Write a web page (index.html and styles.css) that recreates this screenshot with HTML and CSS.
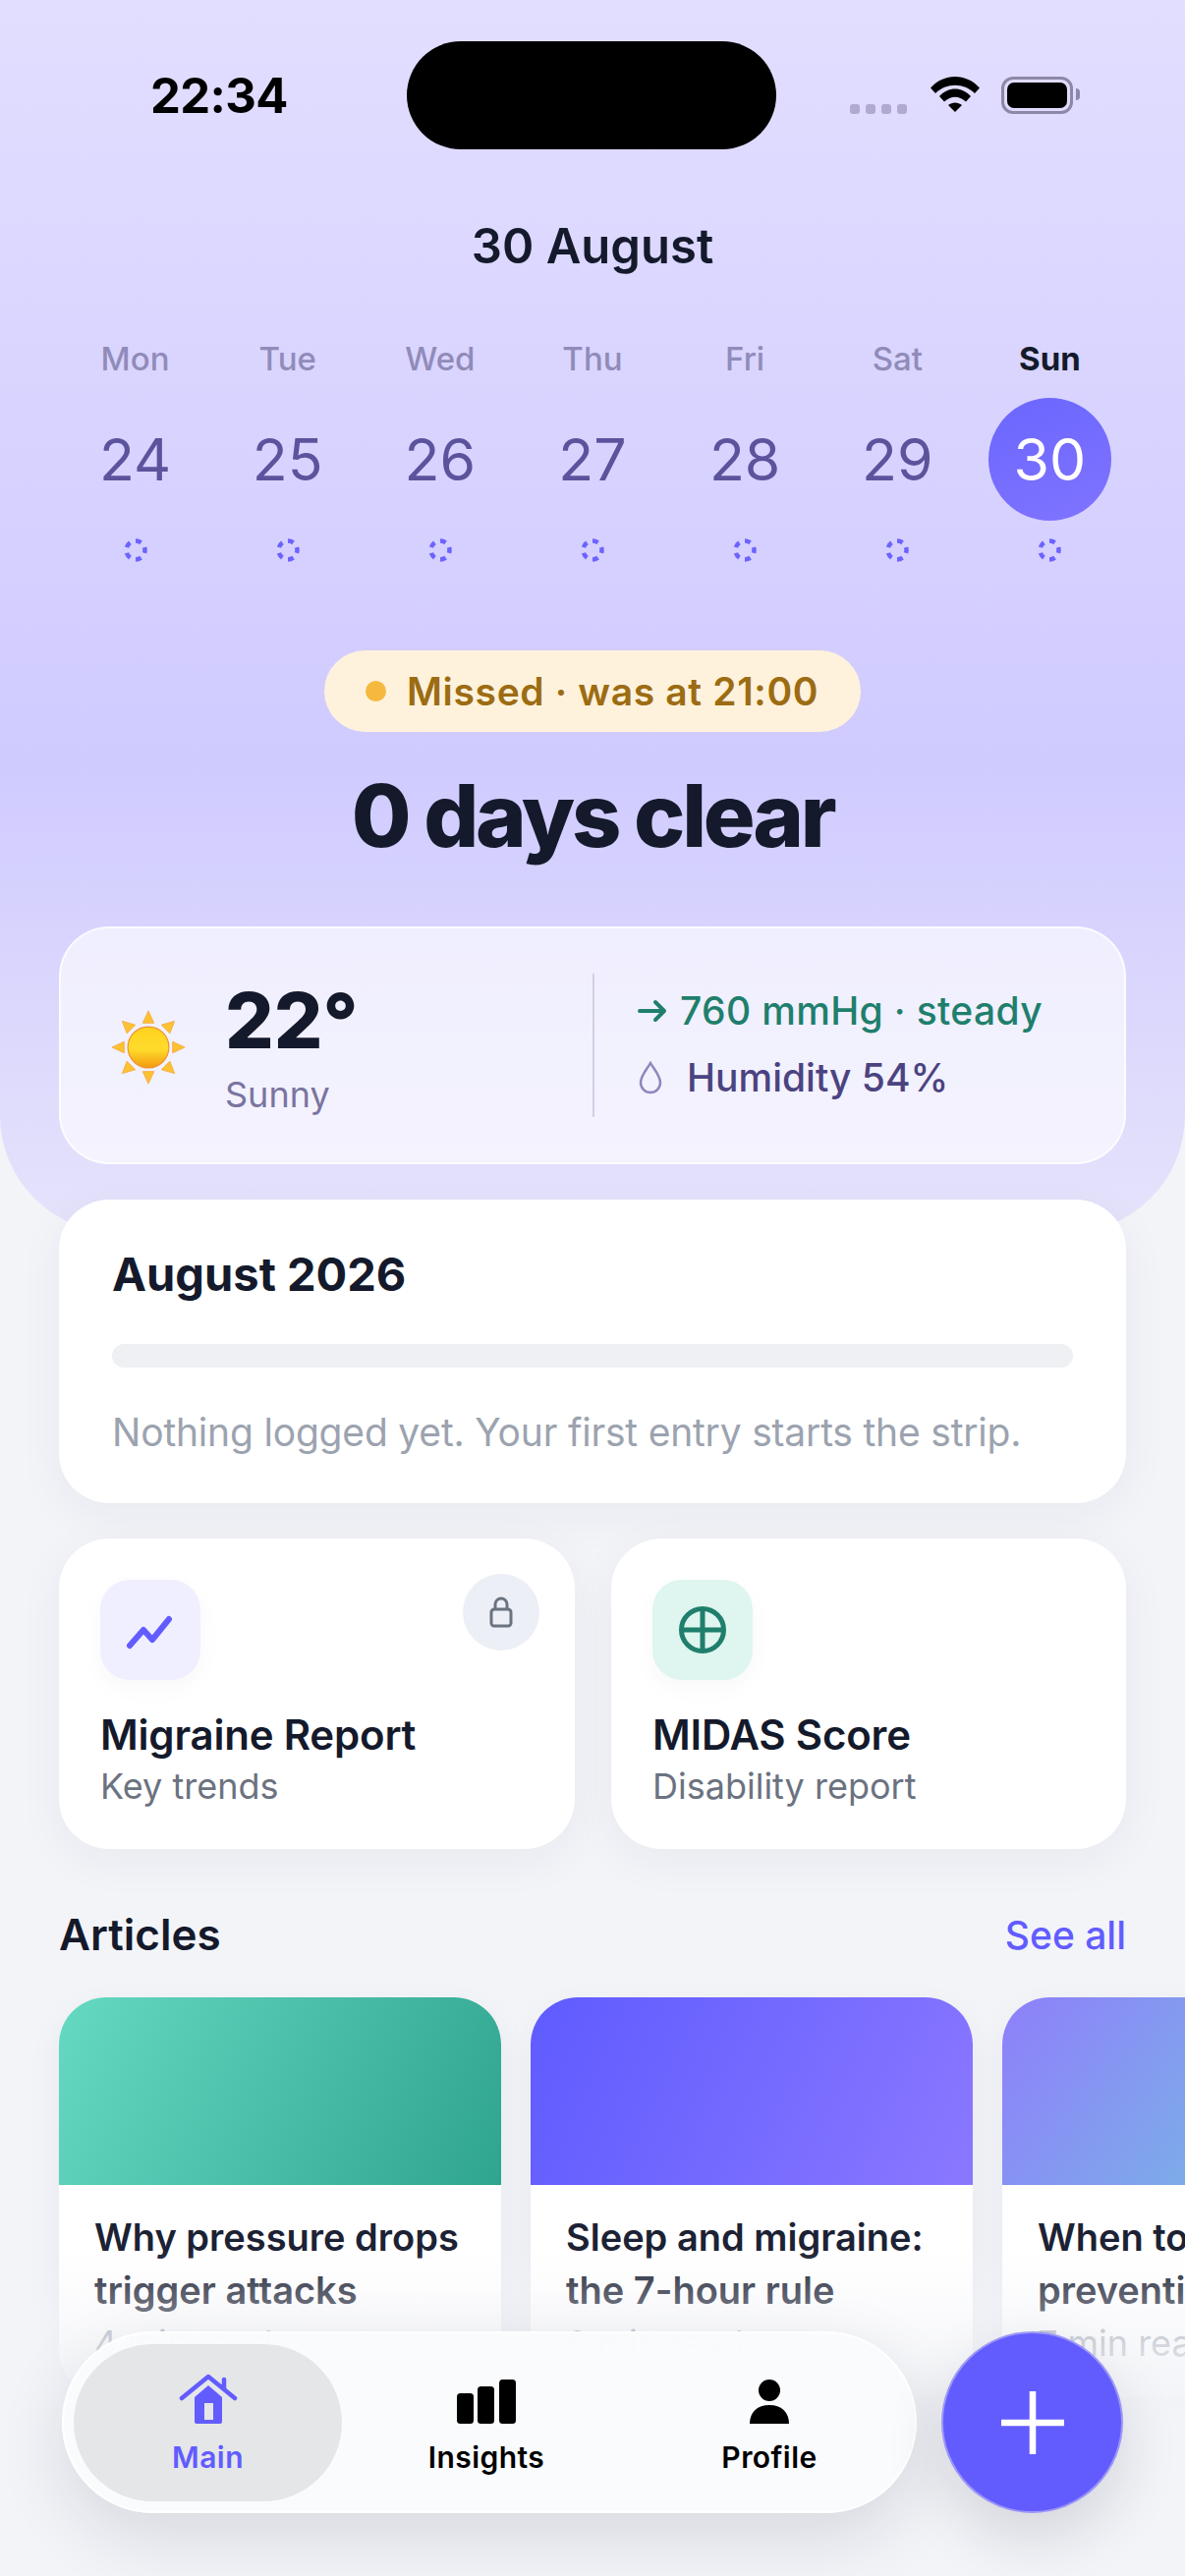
FILE: index.html
```html
<!DOCTYPE html>
<html lang="en">
<head>
<meta charset="utf-8">
<title>Migraine diary</title>
<link rel="stylesheet" href="styles.css">
</head>
<body>
<svg class="defs" width="0" height="0" aria-hidden="true">
  <symbol id="ring" viewBox="0 0 24 24"><circle cx="12" cy="12" r="9.5" fill="none" stroke="#6c63ff" stroke-width="4.5" pathLength="50" stroke-dasharray="5 5" stroke-dashoffset="-7.5"/></symbol>
</svg>
<div class="app">
  <header class="hero">
    <div class="status">
      <span class="time">22:34</span>
      <span class="island"></span>
      <span class="status-icons">
        <span class="signal"><i></i><i></i><i></i><i></i></span>
        <svg class="wifi" width="50" height="38" viewBox="0 0 50 38"><path d="M0 12.500C13 -3 37 -3 50 12.500L45 18C34 7 16 7 5 18Z" fill="#000"/><path d="M9 21C18 11 32 11 41 21L36 26.500C29 20 21 20 14 26.500Z" fill="#000"/><path d="M18 30C22 26.500 28 26.500 32 30L25 37Z" fill="#000"/></svg>
        <span class="battery"><i></i></span>
      </span>
    </div>
    <h1 class="date">30 August</h1>
    <div class="week">
      <div class="day"><span class="dname">Mon</span><span class="dnum">24</span><svg class="ring"><use href="#ring"/></svg></div>
      <div class="day"><span class="dname">Tue</span><span class="dnum">25</span><svg class="ring"><use href="#ring"/></svg></div>
      <div class="day"><span class="dname">Wed</span><span class="dnum">26</span><svg class="ring"><use href="#ring"/></svg></div>
      <div class="day"><span class="dname">Thu</span><span class="dnum">27</span><svg class="ring"><use href="#ring"/></svg></div>
      <div class="day"><span class="dname">Fri</span><span class="dnum">28</span><svg class="ring"><use href="#ring"/></svg></div>
      <div class="day"><span class="dname">Sat</span><span class="dnum">29</span><svg class="ring"><use href="#ring"/></svg></div>
      <div class="day today"><span class="dname">Sun</span><span class="dnum">30</span><svg class="ring"><use href="#ring"/></svg></div>
    </div>
    <div class="pill"><i class="pill-dot"></i>Missed · was at 21:00</div>
    <h2 class="streak">0 days clear</h2>
    <section class="weather">
      <svg class="sun" width="76" height="76" viewBox="0 0 80 80">
        <defs><linearGradient id="sung" x1="0" y1="0" x2="0" y2="1"><stop offset="0" stop-color="#ffd21f"/><stop offset=".55" stop-color="#fedb2b"/><stop offset="1" stop-color="#f39a10"/></linearGradient></defs>
        <g fill="#fdc22f" stroke="#f5ad4a" stroke-width="1"><path d="M40 1L46 14H34Z"/><path d="M40 79L46 66H34Z"/><path d="M1 40L14 34V46Z"/><path d="M79 40L66 34V46Z"/><path d="M12 12L26 16L17 25Z"/><path d="M68 12L54 16L63 25Z"/><path d="M12 68L26 64L17 55Z"/><path d="M68 68L54 64L63 55Z"/></g>
        <circle cx="40" cy="40" r="22" fill="url(#sung)" stroke="#ee8f2a" stroke-width="1.200"/>
      </svg>
      <div class="temp"><strong>22°</strong><span>Sunny</span></div>
      <div class="wx-detail">
        <div class="pressure"><svg width="30" height="26" viewBox="0 0 30 26"><path d="M2 13H27M18 4L27 13L18 22" fill="none" stroke="#1f7f6c" stroke-width="4" stroke-linecap="round" stroke-linejoin="round"/></svg>760 mmHg · steady</div>
        <div class="humidity"><svg width="26" height="34" viewBox="0 0 26 34"><path d="M13 2C9 9 3 15 3 22A10 10 0 0 0 23 22C23 15 17 9 13 2Z" fill="none" stroke="#8e87bd" stroke-width="2.500"/></svg>Humidity 54%</div>
      </div>
    </section>
  </header>

  <main class="content">
    <section class="card month">
      <h3>August 2026</h3>
      <div class="strip"></div>
      <p>Nothing logged yet. Your first entry starts the strip.</p>
    </section>

    <div class="tiles">
      <article class="card tile">
        <span class="tile-ico violet"><svg width="54" height="48" viewBox="0 0 54 48"><path d="M6 40L20 24L29 34L46 13" fill="none" stroke="#625cff" stroke-width="6" stroke-linecap="round" stroke-linejoin="round"/></svg></span>
        <span class="lock"><svg width="26" height="34" viewBox="0 0 26 34"><path d="M7 14V9A6 6 0 0 1 19 9V14" fill="none" stroke="#6b7280" stroke-width="3"/><rect x="3" y="14" width="20" height="17" rx="3" fill="none" stroke="#6b7280" stroke-width="3"/></svg></span>
        <h4>Migraine Report</h4>
        <p>Key trends</p>
      </article>
      <article class="card tile">
        <span class="tile-ico mint"><svg width="54" height="54" viewBox="0 0 54 54"><circle cx="27" cy="27" r="21.500" fill="none" stroke="#1f7f6c" stroke-width="5"/><path d="M27 6V48M6 27H48" stroke="#1f7f6c" stroke-width="5"/></svg></span>
        <h4>MIDAS Score</h4>
        <p>Disability report</p>
      </article>
    </div>

    <div class="sec-head"><h3>Articles</h3><a class="see-all">See all</a></div>

    <div class="articles">
      <article class="art"><div class="art-img g1"></div><div class="art-body"><h5>Why pressure drops trigger attacks</h5><p>4 min read</p></div></article>
      <article class="art"><div class="art-img g2"></div><div class="art-body"><h5>Sleep and migraine: the 7-hour rule</h5><p>6 min read</p></div></article>
      <article class="art"><div class="art-img g3"></div><div class="art-body"><h5>When to consider preventive care</h5><p>7 min read</p></div></article>
    </div>
  </main>

  <div class="fade"></div>

  <nav class="tabbar">
    <div class="tabs">
      <a class="tab active">
        <svg width="60" height="52" viewBox="0 0 60 52"><path d="M16 24L30 12L44 24V49Q44 51 42 51H18Q16 51 16 49Z" fill="#625cff"/><rect x="26" y="30" width="9" height="17" fill="#e5e6e8"/><path d="M3 25L30 3L57 25M46 6V16" fill="none" stroke="#625cff" stroke-width="4.500" stroke-linecap="round" stroke-linejoin="round"/></svg>
        <span>Main</span>
      </a>
      <a class="tab">
        <svg width="60" height="46" viewBox="0 0 60 46"><rect x="0" y="14" width="17" height="31" rx="3.500"/><rect x="21" y="7" width="17" height="38" rx="3.500"/><rect x="43" y="0" width="17" height="45" rx="3.500"/></svg>
        <span>Insights</span>
      </a>
      <a class="tab">
        <svg width="42" height="46" viewBox="0 0 42 46"><circle cx="21" cy="11" r="11"/><path d="M1 45C1 33 9 26 21 26S41 33 41 45Z"/></svg>
        <span>Profile</span>
      </a>
    </div>
    <button class="fab" aria-label="Add"><svg width="64" height="64" viewBox="0 0 64 64"><path d="M32 1V63M1 32H63" stroke="#fff" stroke-width="6.500" stroke-linecap="round"/></svg></button>
  </nav>
</div>
</body>
</html>
```
FILE: styles.css
```css
* { box-sizing: border-box; margin: 0; padding: 0; }
html, body { width: 1206px; height: 2622px; overflow: hidden; }
body { background: #f3f4f8; font-family: Inter, "Noto Sans", sans-serif; color: #141a2b; }
.defs { position: absolute; }
.app { position: relative; width: 1206px; height: 2622px; overflow: hidden; }

.hero {
  height: 1255px;
  padding: 42px 60px 0;
  border-radius: 0 0 120px 120px;
  background: linear-gradient(180deg, #e2deff 0%, #d0cbff 62%, #e5e3fb 100%);
}
.status { display: flex; align-items: center; height: 110px; padding: 0 54px 0 93px; }
.time { width: 140px; font-size: 49px; font-weight: 700; color: #000; letter-spacing: -.6px; }
.island { width: 376px; height: 110px; border-radius: 55px; background: #000; margin-left: 121px; }
.status-icons { display: flex; align-items: center; gap: 22px; margin-left: auto; }
.signal { display: flex; gap: 6px; margin-top: 28px; margin-right: 2px; }
.signal i { width: 10px; height: 10px; border-radius: 3px; background: #b0a9d0; }
.wifi { margin-top: -2px; }
.battery { position: relative; width: 73px; height: 38px; border: 3.500px solid #8e88a8; border-radius: 12px; padding: 3px; display: block; }
.battery i { display: block; height: 100%; background: #000; border-radius: 7px; }
.battery::after { content: ""; position: absolute; right: -9.500px; top: 9px; width: 4px; height: 12px; background: #8e88a8; border-radius: 0 4px 4px 0; }

.date { margin-top: 71px; text-align: center; font-size: 49px; line-height: 56px; font-weight: 600; color: #141a2b; }
.week { display: grid; grid-template-columns: repeat(7, 1fr); margin-top: 66px; }
.day { display: flex; flex-direction: column; align-items: center; }
.dname { font-size: 33px; line-height: 40px; font-weight: 500; color: #908bb9; }
.dnum { width: 125px; height: 125px; margin-top: 20px; border-radius: 50%; display: flex; align-items: center; justify-content: center; font-size: 59px; font-weight: 400; color: #5c539d; }
.ring { width: 24px; height: 24px; margin-top: 18px; }
.today .dname { color: #141a2b; font-weight: 700; }
.today .dnum { background: linear-gradient(160deg, #6b66ff, #8074ff); color: #fff; }

.pill { display: flex; align-items: center; gap: 21px; width: 546px; height: 83px; margin: 90px auto 0; padding-left: 42px; border-radius: 42px; background: #fef2dc; font-size: 39px; font-weight: 600; color: #9c6c13; letter-spacing: .65px; white-space: nowrap; }
.pill-dot { width: 21px; height: 21px; border-radius: 50%; background: #f6b93f; }
.streak { margin-top: 35px; text-align: center; font-size: 88px; line-height: 100px; font-weight: 800; letter-spacing: -3.300px; color: #141a2b; }

.weather { display: flex; align-items: center; height: 242px; margin-top: 63px; padding: 0 50px 0 51px; border: 2px solid rgba(255,255,255,.75); border-radius: 51px; background: rgba(255,255,255,.62); }
.sun { flex: none; margin-right: 40px; margin-top: 4px; }
.temp { width: 374px; margin-top: 2px; display: flex; flex-direction: column; }
.temp strong { font-size: 78px; line-height: 90px; font-weight: 800; color: #141a2b; }
.temp span { margin-top: 8px; font-size: 36px; line-height: 44px; color: #7a749f; }
.wx-detail { height: 146px; padding: 0 0 3px 44px; border-left: 2px solid #d2cfe4; display: flex; flex-direction: column; justify-content: center; gap: 22px; }
.wx-detail > div { display: flex; align-items: center; font-size: 39px; line-height: 46px; font-weight: 500; white-space: nowrap; }
.pressure { color: #1f7f6c; gap: 13px; letter-spacing: .35px; }
.humidity { color: #4b4380; gap: 24px; }

.content { margin-top: -34px; padding: 0 60px; position: relative; }
.card { background: #fff; border-radius: 51px; box-shadow: 0 12px 48px rgba(30,35,70,.05); }
.month { height: 309px; padding: 47px 54px 0; }
.month h3 { font-size: 47px; line-height: 58px; font-weight: 700; }
.strip { height: 24px; margin-top: 42px; border-radius: 12px; background: #eff0f4; }
.month p { margin-top: 43px; font-size: 39px; line-height: 46px; color: #9ca3af; white-space: nowrap; letter-spacing: -.19px; }

.tiles { display: grid; grid-template-columns: 525px 524px; gap: 37px; margin-top: 36px; }
.tile { position: relative; height: 316px; padding: 42px 42px 0; }
.tile-ico { display: flex; align-items: center; justify-content: center; width: 102px; height: 102px; border-radius: 30px; box-shadow: 0 8px 24px rgba(30,35,70,.03); }
.violet { background: #f0efff; }
.mint { background: #dff5ef; }
.lock { position: absolute; top: 36px; right: 36px; width: 78px; height: 78px; border-radius: 50%; background: #eceff6; display: flex; align-items: center; justify-content: center; }
.tile h4 { margin-top: 31px; font-size: 42px; line-height: 50px; font-weight: 600; letter-spacing: -.2px; }
.tile p { margin-top: 5px; font-size: 36px; line-height: 44px; color: #6b7280; }

.sec-head { display: flex; justify-content: space-between; align-items: center; height: 54px; margin-top: 60px; }
.sec-head h3 { font-size: 44px; font-weight: 600; }
.see-all { font-size: 39px; font-weight: 500; color: #625cff; }

.articles { display: flex; gap: 30px; margin-top: 37px; width: 1500px; }
.art { flex: none; width: 450px; height: 407px; border-radius: 48px; background: #fff; overflow: hidden; box-shadow: 0 12px 36px rgba(30,35,70,.05); }
.art-img { height: 191px; }
.g1 { background: linear-gradient(115deg, #66d9c2, #2fa48f); }
.g2 { background: linear-gradient(115deg, #5f5bff, #8a78ff); }
.g3 { background: linear-gradient(125deg, #8e7ffb, #6fd0da); }
.art-body { padding: 26px 20px 0 36px; }
.art h5 { font-size: 38px; line-height: 54px; font-weight: 600; color: #1c2234; }
.art p { margin-top: 5px; font-size: 36px; line-height: 44px; color: #9ca3af; white-space: nowrap; }

.fade { position: absolute; left: 0; right: 0; top: 2290px; height: 332px; background: linear-gradient(180deg, rgba(243,244,248,0) 0%, rgba(243,244,248,.85) 40%, #f3f4f8 58%); pointer-events: none; }

.tabbar { position: absolute; left: 63px; top: 2373px; width: 1080px; display: flex; justify-content: space-between; }
.tabs { display: flex; align-items: center; width: 870px; height: 185px; padding: 0 10px; border-radius: 93px; border: 2px solid #fff; background: rgba(250,251,253,.97); box-shadow: 0 24px 70px rgba(20,25,50,.12); }
.tab { flex: none; width: 288px; height: 160px; border-radius: 80px; display: flex; flex-direction: column; align-items: center; justify-content: flex-end; padding-bottom: 27px; color: #000; font-size: 30px; line-height: 36px; font-weight: 600; letter-spacing: .45px; }
.tab svg { margin-bottom: 15px; fill: #000; }
.tab.active { width: 273px; background: #e5e6e8; color: #625cff; margin-right: 3px; }
.fab { display: flex; align-items: center; justify-content: center; width: 185px; height: 185px; border-radius: 50%; border: 2px solid #9c98f5; background: #625cff; box-shadow: 0 24px 60px rgba(20,25,50,.14); }
```
